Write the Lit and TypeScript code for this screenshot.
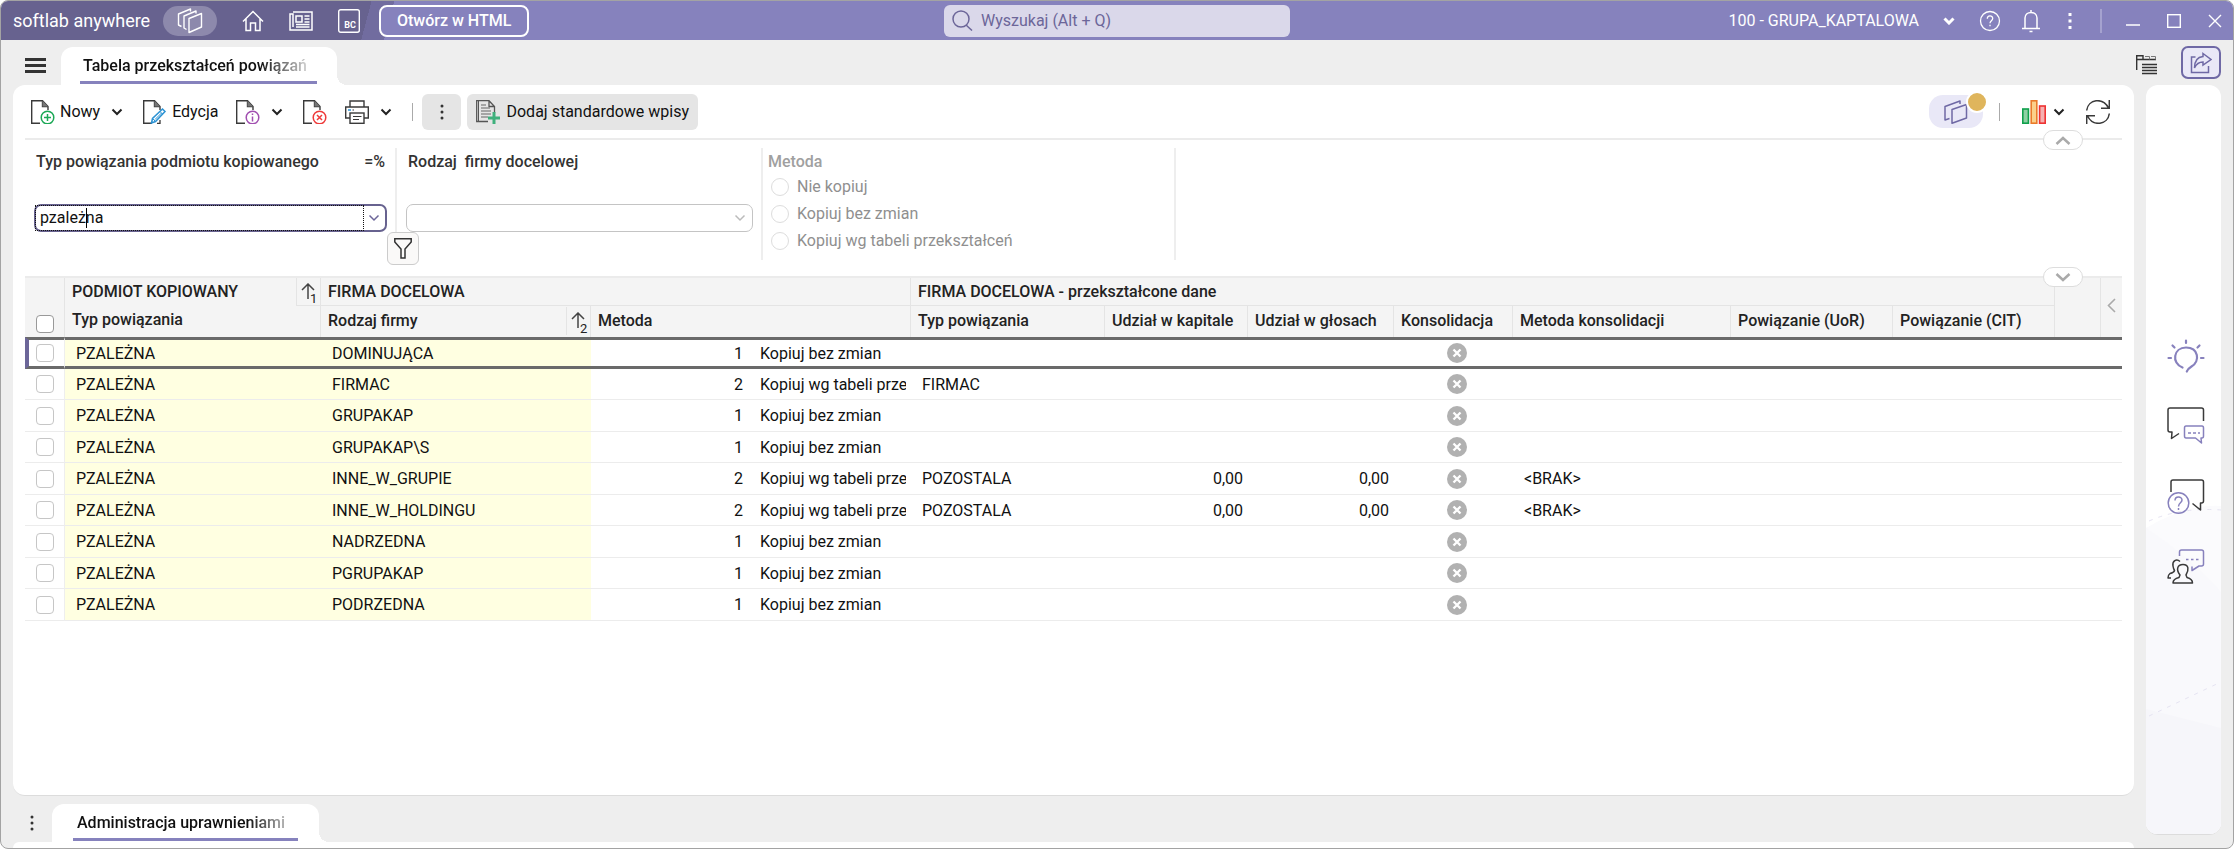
import { LitElement, html, css, svg, nothing } from "lit";
import { customElement } from "lit/decorators.js";
import { classMap } from "lit/directives/class-map.js";

interface Row {
  firma: string;
  nr: number;
  metoda: string;
  typ?: string;
  kapital?: string;
  glosy?: string;
  konsolidacja?: string;
}

const BEZ_ZMIAN = "Kopiuj bez zmian";
const WG_TABELI = "Kopiuj wg tabeli przekształceń";

const ROWS: Row[] = [
  { firma: "DOMINUJĄCA", nr: 1, metoda: BEZ_ZMIAN },
  { firma: "FIRMAC", nr: 2, metoda: WG_TABELI, typ: "FIRMAC" },
  { firma: "GRUPAKAP", nr: 1, metoda: BEZ_ZMIAN },
  { firma: "GRUPAKAP\\S", nr: 1, metoda: BEZ_ZMIAN },
  { firma: "INNE_W_GRUPIE", nr: 2, metoda: WG_TABELI, typ: "POZOSTALA", kapital: "0,00", glosy: "0,00", konsolidacja: "<BRAK>" },
  { firma: "INNE_W_HOLDINGU", nr: 2, metoda: WG_TABELI, typ: "POZOSTALA", kapital: "0,00", glosy: "0,00", konsolidacja: "<BRAK>" },
  { firma: "NADRZEDNA", nr: 1, metoda: BEZ_ZMIAN },
  { firma: "PGRUPAKAP", nr: 1, metoda: BEZ_ZMIAN },
  { firma: "PODRZEDNA", nr: 1, metoda: BEZ_ZMIAN },
];

const icon = (w: number, h: number, body: unknown, cls = "") =>
  html`<svg class="icon ${cls}" width=${w} height=${h} viewBox="0 0 ${w} ${h}" aria-hidden="true">${body}</svg>`;

const chevron = (stroke = "#222", sw = 2) =>
  icon(12, 8, svg`<path d="M1.500 1.500 6 6 10.500 1.500" fill="none" stroke=${stroke} stroke-width=${sw} />`);

const page = svg`<path d="M9 23.300H.7V.7H11.500L17 6.500V10M11.500 .7V6.500H17" fill="none" stroke="#3a3a3a" stroke-width="1.400"/><path d="M11.500 .7V6.500H17Z" fill="#777"/>`;

const ICONS = {
  stack: icon(26, 26, svg`<g fill="none" stroke="#fff" stroke-width="1.400" stroke-linejoin="round"><path d="M12 10.500 24.500 5.500V19L12 24.500Z"/><path d="M19 5.500V3L7 8V20L9.500 21.500"/><path d="M13.500 3.500V1L1.500 6V17L4.500 18.500"/></g>`),
  home: icon(22, 22, svg`<path d="M1 11.500 11 1.500 21 11.500M4 9V20.500H8.500V13H13.500V20.500H18V9" fill="none" stroke="#fff" stroke-width="1.500"/>`),
  news: icon(24, 20, svg`<g fill="none" stroke="#fff" stroke-width="1.500"><path d="M4 1H23V19H1V3H4V16"/><rect x="7" y="5" width="6" height="6"/><path d="M15.500 5H20.500M15.500 8H20.500M15.500 11H20.500M7 13.500H20.500M7 16H20.500"/></g>`),
  bc: html`<svg class="icon" width="22" height="24" viewBox="0 0 22 24" aria-hidden="true"><rect x=".7" y=".7" width="20.600" height="22.600" rx="2" fill="none" stroke="#fff" stroke-width="1.400"/><text x="12" y="19" font-size="9" font-weight="700" text-anchor="middle" fill="#fff">BC</text></svg>`,
  search: icon(21, 21, svg`<g fill="none" stroke="#6c6699" stroke-width="1.500"><circle cx="9" cy="9" r="8"/><path d="M14 15 20 20.500"/></g>`),
  help: html`<svg class="icon" width="22" height="22" viewBox="0 0 22 22" aria-hidden="true"><circle cx="11" cy="11" r="9.500" fill="none" stroke="#fff" stroke-width="1.300"/><path d="M8.300 8.800C8.300 5 13.700 5 13.700 8.500C13.700 10.600 11 10.800 11 13.300M11 14.800V16.300" fill="none" stroke="#fff" stroke-width="1.300"/></svg>`,
  bell: icon(18, 24, svg`<path d="M0 19.500H18M3 19.500V9C3 1.500 15 1.500 15 9V19.500M9 3V1M7.500 22.500H10.500" fill="none" stroke="#fff" stroke-width="1.500"/>`),
  dotsWhite: icon(4, 16, svg`<path d="M.5 0H3.500V3H.5ZM.5 6.500H3.500V9.500H.5ZM.5 13H3.500V16H.5Z" fill="#fff"/>`),
  dots: icon(4, 16, svg`<g fill="#333"><circle cx="2" cy="2" r="1.500"/><circle cx="2" cy="8" r="1.500"/><circle cx="2" cy="14" r="1.500"/></g>`),
  min: icon(14, 14, svg`<path d="M0 11H14" stroke="#fff" stroke-width="1.500"/>`),
  max: icon(14, 14, svg`<rect x=".7" y=".7" width="12.600" height="12.600" fill="none" stroke="#fff" stroke-width="1.400"/>`),
  close: icon(14, 14, svg`<path d="M1 1 13 13M13 1 1 13" stroke="#fff" stroke-width="1.400"/>`),
  burger: icon(21, 15, svg`<path d="M0 1.500H21M0 7.500H21M0 13.500H21" stroke="#333" stroke-width="3"/>`),
  tabs: icon(22, 20, svg`<g fill="none" stroke="#333"><path d="M.7 15V.7H7V4.500H20M.7 4.500H7" stroke-width="1.400"/><path d="M9 1.500H13.500V4.500M15 1.500H19.500V4.500" stroke-width="1" stroke="#777"/><path d="M6 9.500H21M6 12.500H21M6 15.500H21M6 18.500H21" stroke-width="1.500"/></g>`),
  share: icon(22, 22, svg`<g fill="none" stroke="#6f69a5" stroke-width="1.500"><path d="M5.500 5H1.500V20.500H18.500V14"/><path d="M13 1.500 21 7.500 13 13V10C9 10 6.500 11.500 4.500 16C4.500 9 7.500 5 13 4.500Z"/></g>`),
  add: icon(24, 24, svg`${page}<circle cx="16.500" cy="17.500" r="6.300" fill="#fff" stroke="#1ca856" stroke-width="1.500"/><path d="M13 17.500H20M16.500 14V21" stroke="#1ca856" stroke-width="1.500"/>`),
  edit: icon(24, 24, svg`${page}<path d="M17 20V23.300H14" stroke="#3a3a3a" stroke-width="1.300" fill="none"/><path d="M8.500 23 9.500 18.500 19.500 9 22 11.500 12.500 21.500Z" fill="#fff" stroke="#2c93d4" stroke-width="1.500"/><path d="M9.500 18.500 12.500 21.500M17 11.500 19.500 14M12 19.500 18.500 13" stroke="#2c93d4"/>`),
  info: icon(24, 24, svg`${page}<circle cx="16.500" cy="17.500" r="6.300" fill="#fff" stroke="#a14fb0" stroke-width="1.500"/><path d="M16.500 13.500V15M16.500 16.500V21.500" stroke="#a14fb0" stroke-width="1.500"/>`),
  del: icon(24, 24, svg`${page}<circle cx="16.500" cy="17.500" r="6.300" fill="#fff" stroke="#ee3b3b" stroke-width="1.500"/><path d="M14 15 19 20M19 15 14 20" stroke="#ee3b3b" stroke-width="1.500"/>`),
  print: icon(24, 24, svg`<g fill="none" stroke="#3a3a3a" stroke-width="1.400"><path d="M5 7V1H19V7M5 18H.7V7H23.300V18H19"/><rect x="5" y="13" width="14" height="10.300" fill="#fff"/></g><path d="M7.500 10H9M8 16.500H16.500M8 19.500H14" stroke="#3a3a3a" stroke-width="1.200"/><path d="M3 10H6" stroke="#2c93d4" stroke-width="1.400"/>`),
  addStd: icon(24, 24, svg`<path d="M12 21.500H.7V.7H13L18.500 6.500V13M13 .7V6.500H18.500" fill="none" stroke="#555" stroke-width="1.300"/><path d="M2.500 1V21" stroke="#555"/><path d="M5 5H10M5 8H14M5 11H15M5 14H15M5 17H12" stroke="#666" stroke-width="1.200"/><path d="M18 12V24M12 18H24" stroke="#3fb07c" stroke-width="3"/>`),
  windows: icon(24, 24, svg`<g fill="none" stroke="#6f69a5" stroke-width="1.500" stroke-linejoin="round"><path d="M8 9.500 22.500 4.500V18L8 23.300Z"/><path d="M16 4V1L1 6.500V20L5.500 18.500"/></g>`),
  chart: icon(24, 24, svg`<g stroke-width="1.600"><rect x=".8" y="9" width="5.600" height="14.200" fill="#8fd0a4" stroke="#10a04c"/><rect x="9.200" y=".8" width="5.600" height="22.400" fill="#fbd08a" stroke="#ea7a2a"/><rect x="17.600" y="6" width="5.600" height="17.200" fill="#f6b0b0" stroke="#e33"/></g>`),
  refresh: icon(24, 24, svg`<path d="M.7 10.500C2-1 17-3 22.500 8M23.300 0V8.300H15M23.300 13.500C22 25 7 27 1.500 16M.7 24V15.700H9" fill="none" stroke="#3a3a3a" stroke-width="1.500"/>`),
  funnel: icon(18, 21, svg`<path d="M.8.800H17.200V4L11 11V20H7V11L.8 4Z" fill="none" stroke="#333" stroke-width="1.500"/>`),
  up: icon(14, 17, svg`<path d="M7 1V16M1 7 7 1 13 7" fill="none" stroke="#444" stroke-width="1.500"/>`),
  off: icon(20, 20, svg`<circle cx="10" cy="10" r="10" fill="#b1b1b1"/><path d="M6.500 6.500 13.500 13.500M13.500 6.500 6.500 13.500" stroke="#fff" stroke-width="2.300"/>`),
  left: icon(9, 15, svg`<path d="M8 1 1.500 7.500 8 14" fill="none" stroke="#aaa" stroke-width="1.600"/>`),
  bulb: icon(38, 34, svg`<g fill="none" stroke="#8781bd" stroke-width="2.200" stroke-linecap="round"><path d="M15.500 28.500C4 24 6.500 8.500 19 8.500C31.500 8.500 33.500 22 24.500 27.500C22 29 20.500 31 19.800 32.500"/><path d="M19 1.500V4M5.500 6.500 7.500 8.500M32.500 6.500 30.500 8.500M1.500 19H4M34 19H36.500"/></g>`),
  chat: icon(38, 38, svg`<g fill="none" stroke-width="1.500" stroke-linejoin="round"><path d="M36.500 14V3Q36.500 1 34.500 1H3Q1 1 1 3V23Q1 25 3 25H5L4.500 31.500 12 26.500" stroke="#3a3a3a"/><path d="M19 19H35Q36.500 19 36.500 21V29Q36.500 31 35 31H34L34.500 36 28.500 31H19Q17.500 31 17.500 29V21Q17.500 19 19 19Z" stroke="#8781bd"/><path d="M21 26H33" stroke="#8781bd" stroke-dasharray="3 2"/></g>`),
  ask: icon(38, 36, svg`<g fill="none" stroke-width="1.500" stroke-linejoin="round"><path d="M4 13V3Q4 1 6 1H34.500Q36.500 1 36.500 3V22Q36.500 24 34.500 24H33.500V31L25.500 24.500" stroke="#3a3a3a"/><circle cx="11.500" cy="24" r="10.300" stroke="#8781bd"/><path d="M8 21.500C8 17 15 17 15 21C15 24 11.500 23.500 11.500 27.500M11.500 29V31" stroke="#8781bd"/></g>`),
  people: icon(38, 36, svg`<g fill="none" stroke-width="1.500" stroke-linejoin="round"><path d="M12.500 7V3Q12.500 1 14.500 1H34.500Q36.500 1 36.500 3V15Q36.500 17 34.500 17H32L25 21.500V17.500" stroke="#8781bd"/><path d="M19 10.500H33" stroke="#8781bd" stroke-dasharray="2.500 2.500"/><path d="M6 34Q6 30 12 28.500L13 26C9 21 10 15.500 16 15.500C22 15.500 22 21 19 26L20 28.500Q25.500 30 25.500 34Z" stroke="#3a3a3a"/><path d="M13 12.500C9.500 9 5 12 6 17Q6.500 20 7.500 21.500Q7 23.500 3 24.500Q1 26 1 29H4" stroke="#3a3a3a"/></g>`),
};

@customElement("app-root")
export class AppRoot extends LitElement {
  static styles = css`
    :host {
      display: block;
      font-family: Roboto, "Noto Sans", sans-serif;
      font-size: 16px;
      line-height: 20px;
      color: #111;
    }
    * { box-sizing: border-box; }
    button, input, select { font: inherit; color: inherit; margin: 0; }
    button { border: 0; padding: 0; background: none; display: inline-flex; align-items: center; }
    .icon { display: block; flex: none; font-family: Roboto, sans-serif; }
    .window {
      display: flex;
      flex-direction: column;
      height: 100vh;
      border: 1px solid #a3a3a3;
      border-radius: 8px;
      background: #eeeeee;
      overflow: hidden;
    }
    .titlebar {
      flex: none;
      height: 39px;
      display: grid;
      grid-template-columns: 1fr 346px 1fr;
      align-items: center;
      color: #fff;
      background: linear-gradient(105deg, #67628f 358px, #716c9f 358px 380px, #8682bd 380px);
    }
    .left, .right { display: flex; align-items: center; }
    .left { padding-left: 12px; }
    .right { justify-content: flex-end; padding-right: 11px; }
    .brand { font-size: 18px; width: 150px; white-space: nowrap; }
    .stack { width: 54px; height: 30px; border-radius: 15px; background: #8d89ac; justify-content: center; }
    .nav { display: flex; align-items: center; gap: 25px; padding: 0 19px 0 25px; }
    .open {
      height: 32px; padding: 0 16px; border: 2px solid #fff; border-radius: 8px; background: #8682bd;
      font-weight: 500; color: #fff;
    }
    .search {
      display: flex; align-items: center; gap: 8px; height: 32px; padding: 0 8px;
      border-radius: 6px; background: #dad8ea; color: #6c6699;
    }
    .search input { flex: 1; min-width: 0; border: 0; outline: 0; background: none; padding: 0; }
    .search input::placeholder { color: #6c6699; opacity: 1; }
    .company { gap: 24px; margin-right: 24px; color: #fff; }
    .tools { display: flex; align-items: center; gap: 21px; }
    .bar { width: 2px; height: 24px; background: #a5a2cf; }
    .winbtns { display: flex; align-items: center; gap: 27px; margin-left: 24px; }
    .tools .kebab { margin: 0 7px; }

    .tabrow { flex: none; height: 45px; display: flex; align-items: flex-end; padding: 0 12px 0 24px; }
    .burger { width: 36px; height: 40px; }
    .tab {
      position: relative; height: 38px; padding: 9px 20px 0 19px; border-radius: 12px 12px 0 0;
      background: #fff; font-weight: 500; display: flex; flex-direction: column; justify-content: space-between;
    }
    .tab::after {
      content: ""; position: absolute; left: 100%; bottom: 0; width: 10px; height: 10px;
      background: radial-gradient(circle at 100% 0, transparent 10px, #fff 10px);
    }
    .tab a {
      color: inherit; text-decoration: none; width: 237px; padding: 0 4px 0 3px; white-space: nowrap; overflow: hidden;
      -webkit-mask-image: linear-gradient(90deg, #000 180px, transparent 238px);
      mask-image: linear-gradient(90deg, #000 180px, transparent 238px);
    }
    .tab i { height: 3px; background: #8682bd; margin-bottom: 1px; }
    .tabtools { margin-left: auto; display: flex; align-items: center; gap: 23px; height: 40px; align-self: center; }
    .tabtools button:first-child { padding-top: 4px; }
    .sharebtn { width: 40px; height: 33px; border: 2px solid #6f69a5; border-radius: 7px; background: #e9e8f7; justify-content: center; }

    .body { flex: 1; min-height: 0; display: flex; gap: 12px; padding: 0 12px; }
    .main { flex: 1; min-width: 0; display: flex; flex-direction: column; }
    .panel {
      flex: 1; min-height: 0; background: #fff; border-radius: 12px; padding: 0 12px;
      border-bottom: 1px solid #dcdcdc;
    }
    .side {
      flex: none; width: 75px; margin-bottom: 13px; border-radius: 12px; overflow: hidden; background: #fff;
      border-bottom: 1px solid #dcdcdc; display: grid;
    }
    .side > * { grid-area: 1 / 1; }
    .wash { width: 100%; height: 330px; align-self: end; display: block; }
    .sideicons { display: flex; flex-direction: column; align-items: center; gap: 34px; padding: 254px 0 0 4px; position: relative; }

    .toolbar { height: 55px; display: flex; align-items: center; padding-left: 6px; border-bottom: 2px solid #ebebeb; position: relative; }
    .toolbar .grp { display: flex; align-items: center; margin-right: 9px; }
    .toolbar .solo { margin-right: 18px; }
    .toolbar .lbl { gap: 5px; }
    .toolbar .chev { width: 34px; height: 30px; justify-content: center; }
    .sep { width: 1px; height: 18px; background: #aaa; flex: none; }
    .grey { background: #e5e5e5; border-radius: 6px; height: 36px; justify-content: center; }
    .more { width: 39px; margin: 0 6px 0 9px; }
    .std { padding: 0 9px; gap: 6px; }
    .tright { margin-left: auto; margin-right: 12px; display: flex; align-items: center; }
    .tright .sep { margin: 0 22px 0 16px; }
    .toolbar .tright .chev { width: 26px; margin-right: 14px; }
    .winpill { position: relative; width: 54px; height: 33px; border-radius: 14px; background: #e9e8f7; justify-content: center; }
    .winpill::after {
      content: ""; position: absolute; right: -5px; top: -4px; width: 18px; height: 18px; border-radius: 50%;
      background: #dfb55c; border: 2px solid #fff;
    }
    .handle {
      position: absolute; right: 39px; width: 40px; height: 20px; border: 1px solid #ddd; border-radius: 10px;
      background: #fff; justify-content: center; z-index: 2;
    }
    .toolbar .handle { bottom: -12px; }

    .filters { display: flex; height: 136px; padding: 8px 0 16px 9px; }
    .filter { width: 363px; border-right: 2px solid #eee; font-weight: 500; color: #333; position: relative; }
    .filter + .filter { width: 366px; padding-left: 9px; }
    .fhead { display: flex; justify-content: space-between; padding: 4px 10px 0 2px; height: 56px; white-space: pre; }
    .combo {
      display: flex; height: 28px; width: 353px; border: 2px solid #67628f; border-radius: 7px; background: #fff; position: relative;
      font-weight: 400; color: #111;
    }
    .combo input { flex: 1; min-width: 0; border: 0; outline: 1px dotted #111; padding: 0 4px; background: none; }
    .combo button { width: 22px; justify-content: center; }
    .caret { position: absolute; left: 50px; top: 2px; width: 1px; height: 20px; background: #000; }
    .pick { position: relative; width: 347px; }
    .pick select {
      appearance: none; width: 100%; height: 28px; border: 1px solid #c4c4c4; border-radius: 7px; background: #fff; display: block;
    }
    .pick .icon { position: absolute; right: 7px; top: 10px; }
    .funnel {
      position: absolute; right: -24px; bottom: -5px; width: 32px; height: 33px; border: 1px solid #ccc; border-radius: 6px;
      background: #faf9f8; justify-content: center; z-index: 2;
    }
    fieldset { border: 0; border-right: 2px solid #eee; margin: 0; padding: 4px 0 0 5px; width: 413px; color: #8f8f8f; }
    legend { padding: 0; font-weight: 500; color: #a0a0a0; height: 20px; float: left; width: 100%; margin-bottom: 1px; }
    .radio { display: flex; align-items: center; gap: 8px; height: 27px; padding-left: 3px; clear: both; }
    .radio input { appearance: none; width: 18px; height: 18px; border: 1px solid #ddd; border-radius: 50%; background: #fff; }

    .grid { position: relative; border-top: 2px solid #ebebeb; }
    .grid > .handle { top: -11px; }
    table { width: 100%; border-collapse: separate; border-spacing: 0; table-layout: fixed; }
    th {
      background: #f4f4f4; font-weight: 500; text-align: left; padding: 0 0 0 7px; border-right: 1px solid #e4e4e4;
      white-space: nowrap; overflow: hidden; color: #222;
    }
    thead tr:first-child th { height: 28px; }
    thead tr:last-child th { height: 31px; padding-bottom: 2px; }
    .under { border-bottom: 1px solid #e4e4e4; }
    th .hd { display: flex; justify-content: space-between; align-items: center; }
    .sort {
      display: flex; width: 24px; height: 28px; padding: 5px 2px 0 4px; border-left: 1px solid #e4e4e4;
    }
    .sort small { font-size: 13px; font-weight: 400; line-height: 13px; align-self: flex-end; margin-left: -5px; }
    .pk { vertical-align: top; }
    .pk .sort { border-bottom: 1px solid #e4e4e4; }
    .pk span { display: block; }
    .pk .sub { line-height: 28px; }
    .c { text-align: center; padding: 0; }
    td.c { padding-left: 7px; }
    .all { vertical-align: bottom; padding: 0 0 4px 11px; }
    .last { border-right: 0; }
    .box {
      appearance: none; display: block; width: 18px; height: 18px; border: 1px solid #c6c6c6; border-radius: 4px; background: #fff;
    }
    .all .box { border-color: #999; }
    td { height: 31px; padding: 1px 0 0; border-bottom: 1px solid #ececec; white-space: nowrap; overflow: hidden; line-height: 20px; }
    tr.tall td { height: 32px; }
    td.sel { padding: 0 0 0 11px; border-right: 1px solid #eee; }
    td.key { background: #ffffe1; padding-left: 11px; }
    td.t { padding-left: 11px; }
    td.n { text-align: right; padding-right: 5px; }
    tr.current td { height: 32px; border-top: 3px solid #6a6a6a; border-bottom: 3px solid #6a6a6a; }
    tr.current td.sel { padding-left: 7px; border-left: 4px solid #6c6699; }
    .met { display: flex; margin-right: 5px; overflow: hidden; }
    .met b { font-weight: 400; width: 152px; text-align: right; margin-right: 17px; flex: none; }
    .met span { flex: 1; min-width: 0; overflow: hidden; }
    td .icon { margin: 0 auto; }

    .bottom { flex: none; height: 46px; padding: 0 0 0 17px; display: flex; align-items: flex-end; }
    .bottom .dotsbtn { width: 22px; height: 38px; }
    .bottom .tab { padding-left: 21px; padding-right: 21px; }
    .bottom .tab a { width: 225px; padding-left: 4px; -webkit-mask-image: linear-gradient(90deg, #000 175px, transparent 230px); mask-image: linear-gradient(90deg, #000 175px, transparent 230px); }
    .under-panel { flex: none; height: 6px; background: #fff; border-radius: 12px 12px 0 0; }
  `;

  private column(label: string) {
    return html`<th scope="col">${label}</th>`;
  }

  private row(r: Row, i: number) {
    return html`<tr class=${classMap({ current: i === 0, tall: i > 0 && i % 2 === 0 })}>
      <td class="sel"><input class="box" type="checkbox" aria-label="Zaznacz ${r.firma}" /></td>
      <td class="key">PZALEŻNA</td>
      <td class="key">${r.firma}</td>
      <td><div class="met"><b>${r.nr}</b><span>${r.metoda}</span></div></td>
      <td class="t">${r.typ ?? nothing}</td>
      <td class="n">${r.kapital ?? nothing}</td>
      <td class="n">${r.glosy ?? nothing}</td>
      <td class="c">${ICONS.off}</td>
      <td class="t">${r.konsolidacja ?? nothing}</td>
      <td></td><td></td><td></td><td></td>
    </tr>`;
  }

  private titlebar() {
    return html`<header class="titlebar">
      <div class="left">
        <span class="brand">softlab anywhere</span>
        <button class="stack" aria-label="Okna">${ICONS.stack}</button>
        <nav class="nav">
          <button aria-label="Start">${ICONS.home}</button>
          <button aria-label="Aktualności">${ICONS.news}</button>
          <button aria-label="BC">${ICONS.bc}</button>
        </nav>
        <button class="open">Otwórz w HTML</button>
      </div>
      <label class="search">${ICONS.search}<input type="text" placeholder="Wyszukaj (Alt + Q)" aria-label="Wyszukaj" /></label>
      <div class="right">
        <button class="company">100 - GRUPA_KAPTALOWA ${chevron("#fff", 3)}</button>
        <div class="tools">
          <button aria-label="Pomoc">${ICONS.help}</button>
          <button aria-label="Powiadomienia">${ICONS.bell}</button>
          <button class="kebab" aria-label="Więcej">${ICONS.dotsWhite}</button>
          <span class="bar"></span>
        </div>
        <div class="winbtns">
          <button aria-label="Minimalizuj">${ICONS.min}</button>
          <button aria-label="Maksymalizuj">${ICONS.max}</button>
          <button aria-label="Zamknij">${ICONS.close}</button>
        </div>
      </div>
    </header>`;
  }

  private toolbar() {
    return html`<div class="toolbar">
      <div class="grp"><button class="lbl">${ICONS.add}Nowy</button><button class="chev" aria-label="Nowy – opcje">${chevron()}</button></div>
      <div class="grp solo"><button class="lbl">${ICONS.edit}Edycja</button></div>
      <div class="grp"><button aria-label="Informacje">${ICONS.info}</button><button class="chev" aria-label="Informacje – opcje">${chevron()}</button></div>
      <div class="grp solo"><button aria-label="Usuń">${ICONS.del}</button></div>
      <div class="grp"><button aria-label="Drukuj">${ICONS.print}</button><button class="chev" aria-label="Drukuj – opcje">${chevron()}</button></div>
      <span class="sep"></span>
      <button class="grey more" aria-label="Więcej">${ICONS.dots}</button>
      <button class="grey std">${ICONS.addStd}Dodaj standardowe wpisy</button>
      <div class="tright">
        <button class="winpill" aria-label="Okna">${ICONS.windows}</button>
        <span class="sep"></span>
        <button aria-label="Wykres">${ICONS.chart}</button>
        <button class="chev" aria-label="Wykres – opcje">${chevron()}</button>
        <button aria-label="Odśwież">${ICONS.refresh}</button>
      </div>
      <button class="handle" aria-label="Zwiń">${icon(16, 9, svg`<path d="M1.500 8 8 2 14.500 8" fill="none" stroke="#aaa" stroke-width="2.500"/>`)}</button>
    </div>`;
  }

  private filters() {
    return html`<div class="filters">
      <div class="filter">
        <div class="fhead"><label for="typ">Typ powiązania podmiotu kopiowanego</label><span>=%</span></div>
        <div class="combo">
          <input id="typ" type="text" value="pzależna" /><span class="caret"></span>
          <button aria-label="Rozwiń">${chevron("#6c6699", 1.5)}</button>
        </div>
        <button class="funnel" aria-label="Filtruj">${ICONS.funnel}</button>
      </div>
      <div class="filter">
        <div class="fhead"><label for="rodzaj">Rodzaj  firmy docelowej</label></div>
        <div class="pick"><select id="rodzaj"><option></option></select>${chevron("#bbb", 1.5)}</div>
      </div>
      <fieldset disabled>
        <legend>Metoda</legend>
        ${["Nie kopiuj", BEZ_ZMIAN, WG_TABELI].map((t) => html`<label class="radio"><input type="radio" name="metoda" />${t}</label>`)}
      </fieldset>
    </div>`;
  }

  private grid() {
    const widths = [40, 256, 270, 320, 194, 143, 146, 119, 218, 162, 162];
    return html`<div class="grid">
      <button class="handle" aria-label="Rozwiń">${icon(16, 9, svg`<path d="M1.500 1 8 7 14.500 1" fill="none" stroke="#aaa" stroke-width="2.500"/>`)}</button>
      <table>
        <colgroup>${widths.map((w) => html`<col width=${w} />`)}<col /><col width="21" /></colgroup>
        <thead>
          <tr>
            <th class="all" rowspan="2"><input class="box" type="checkbox" aria-label="Zaznacz wszystko" /></th>
            <th class="pk" rowspan="2"><div class="hd">PODMIOT KOPIOWANY<div class="sort">${ICONS.up}<small>1</small></div></div><span class="sub">Typ powiązania</span></th>
            <th class="under" colspan="2">FIRMA DOCELOWA</th>
            <th class="under" colspan="7">FIRMA DOCELOWA - przekształcone dane</th>
            <th rowspan="2"></th>
            <th class="c last" rowspan="2"><button aria-label="Kolumny">${ICONS.left}</button></th>
          </tr>
          <tr>
            <th scope="col"><div class="hd">Rodzaj firmy<div class="sort">${ICONS.up}<small>2</small></div></div></th>
            ${["Metoda", "Typ powiązania", "Udział w kapitale", "Udział w głosach", "Konsolidacja", "Metoda konsolidacji", "Powiązanie (UoR)", "Powiązanie (CIT)"].map((l) => this.column(l))}
          </tr>
        </thead>
        <tbody>${ROWS.map((r, i) => this.row(r, i))}</tbody>
      </table>
    </div>`;
  }

  render() {
    return html`<div class="window">
      ${this.titlebar()}
      <div class="tabrow">
        <button class="burger" aria-label="Menu">${ICONS.burger}</button>
        <div class="tab"><a href="#tabela">Tabela przekształceń powiązań</a><i></i></div>
        <div class="tabtools">
          <button aria-label="Karty">${ICONS.tabs}</button>
          <button class="sharebtn" aria-label="Udostępnij">${ICONS.share}</button>
        </div>
      </div>
      <div class="body">
        <div class="main">
          <section class="panel">${this.toolbar()}${this.filters()}${this.grid()}</section>
          <div class="bottom">
            <button class="dotsbtn" aria-label="Więcej">${ICONS.dots}</button>
            <div class="tab"><a href="#administracja">Administracja uprawnieniami</a><i></i></div>
          </div>
          <div class="under-panel"></div>
        </div>
        <aside class="side">
          <svg class="wash" viewBox="0 0 75 330" preserveAspectRatio="none" aria-hidden="true">
            <path d="M0 24Q40 0 75 2V330H0Z" fill="#fbfbfd"/>
            <path d="M0 24Q40 50 75 88V330H0Z" fill="#f9f9fc"/>
            <path d="M0 205 75 224V330H0Z" fill="#f6f6fa"/>
            <path d="M3 17Q35 3 75 6M3 212 75 178" fill="none" stroke="#e6e4f2" stroke-dasharray="4 6"/>
          </svg>
          <div class="sideicons">
            <button aria-label="Podpowiedzi">${ICONS.bulb}</button>
            <button aria-label="Czat">${ICONS.chat}</button>
            <button aria-label="Pytania">${ICONS.ask}</button>
            <button aria-label="Społeczność">${ICONS.people}</button>
          </div>
        </aside>
      </div>
    </div>`;
  }
}
